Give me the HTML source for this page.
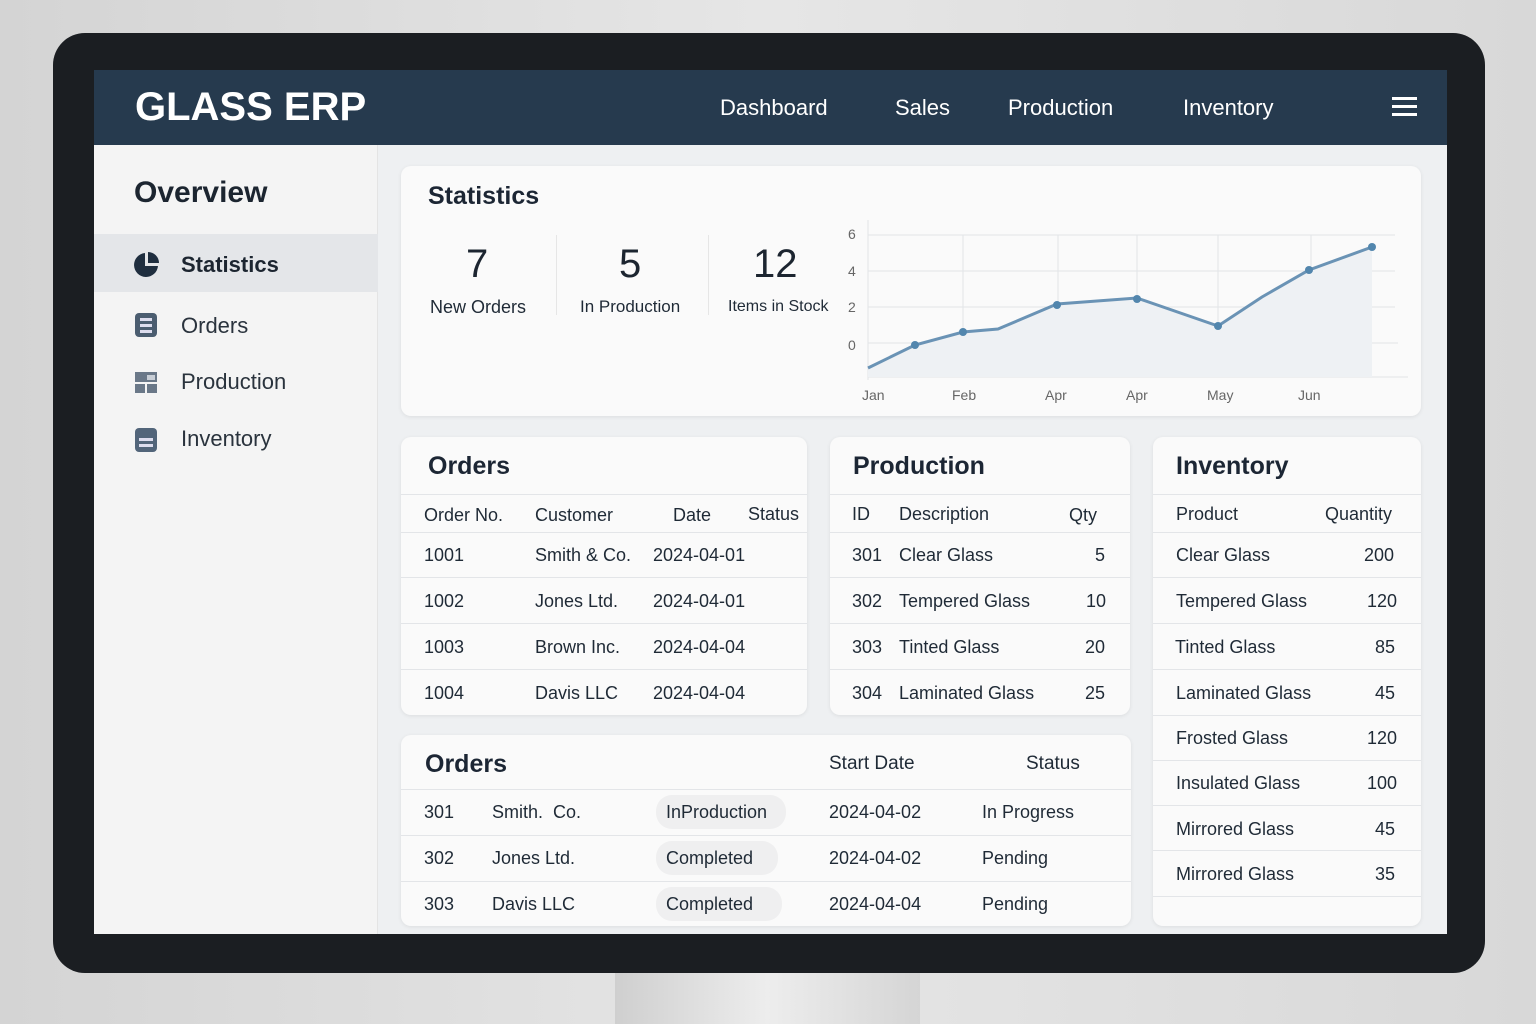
<!DOCTYPE html>
<html><head><meta charset="utf-8"><style>
*{margin:0;padding:0;box-sizing:border-box}
body{width:1536px;height:1024px;overflow:hidden;background:linear-gradient(90deg,#d4d4d4,#e6e6e6 50%,#d8d8d8);font-family:"Liberation Sans",sans-serif;color:#1c2530;position:relative}
.a{position:absolute;white-space:nowrap}
.card{position:absolute;background:#fafafa;border-radius:10px;box-shadow:0 1px 4px rgba(0,0,0,.08)}
.h{font-weight:bold;font-size:25px;color:#1c2634}
.t{font-size:18px;color:#1f2a36}
.line{position:absolute;height:1px;background:#e3e5e8}
.pill{position:absolute;background:#efeff0;border-radius:16px;height:34px}
</style></head><body>
<div class="a" style="left:615px;top:960px;width:305px;height:64px;background:linear-gradient(90deg,#cfcfcf,#ededed,#d5d5d5)"></div>
<div class="a" style="left:53px;top:33px;width:1432px;height:940px;background:#1b1e22;border-radius:32px"></div>
<div class="a" style="left:94px;top:70px;width:1353px;height:864px;background:#eef0f2"></div>
<div class="a" style="left:94px;top:70px;width:1353px;height:75px;background:#263a4e"></div>
<div class="a" style="left:135px;top:85px;font-size:40px;font-weight:bold;color:#fff">GLASS ERP</div>
<div class="a" style="left:720px;top:95px;font-size:22px;color:#fff">Dashboard</div>
<div class="a" style="left:895px;top:95px;font-size:22px;color:#fff">Sales</div>
<div class="a" style="left:1008px;top:95px;font-size:22px;color:#fff">Production</div>
<div class="a" style="left:1183px;top:95px;font-size:22px;color:#fff">Inventory</div>
<div class="a" style="left:1392px;top:97px;width:25px;height:3px;background:#fff;box-shadow:0 8px 0 #fff,0 16px 0 #fff"></div>
<div class="a" style="left:94px;top:145px;width:284px;height:789px;background:#f4f4f4;border-right:1px solid #e4e4e4"></div>
<div class="a" style="left:134px;top:176px;font-size:30px;font-weight:bold">Overview</div>
<div class="a" style="left:94px;top:234px;width:284px;height:58px;background:#e4e6e9"></div>
<svg class="a" style="left:133px;top:251px" width="28" height="28" viewBox="0 0 28 28"><path d="M12 2A12 12 0 1 0 25 15H12Z" fill="#1f2e3f"/><path d="M15 1V12H26A11 11 0 0 0 15 1Z" fill="#1f2e3f"/></svg>
<div class="a" style="left:181px;top:252px;font-size:22px;font-weight:bold">Statistics</div>
<svg class="a" style="left:135px;top:313px" width="24" height="24"><rect width="22" height="24" rx="4" fill="#4b5d70"/><rect x="5" y="5" width="12" height="3" fill="#dde"/><rect x="5" y="11" width="12" height="3" fill="#dde"/><rect x="5" y="17" width="12" height="3" fill="#dde"/></svg>
<div class="a" style="left:181px;top:313px;font-size:22px;color:#2a333d">Orders</div>
<svg class="a" style="left:135px;top:372px" width="24" height="22"><rect width="22" height="10" fill="#6a7888"/><rect y="12" width="10" height="9" fill="#6a7888"/><rect x="12" y="12" width="10" height="9" fill="#6a7888"/><rect x="12" y="3" width="8" height="5" fill="#c8ced6"/></svg>
<div class="a" style="left:181px;top:369px;font-size:22px;color:#2a333d">Production</div>
<svg class="a" style="left:135px;top:428px" width="24" height="24"><rect width="22" height="24" rx="4" fill="#52657a"/><rect x="4" y="10" width="14" height="3" fill="#dde"/><rect x="4" y="16" width="14" height="3" fill="#dde"/></svg>
<div class="a" style="left:181px;top:426px;font-size:22px;color:#2a333d">Inventory</div>
<div class="card" style="left:401px;top:166px;width:1020px;height:250px"></div>
<div class="a h" style="left:428px;top:182px">Statistics</div>
<div class="a" style="left:466px;top:242px;font-size:40px">7</div>
<div class="a t" style="left:430px;top:297px">New Orders</div>
<div class="a" style="left:556px;top:235px;width:1px;height:80px;background:#e6e6e6"></div>
<div class="a" style="left:619px;top:242px;font-size:40px">5</div>
<div class="a t" style="left:580px;top:297px;font-size:17px">In Production</div>
<div class="a" style="left:708px;top:235px;width:1px;height:80px;background:#e6e6e6"></div>
<div class="a" style="left:753px;top:242px;font-size:40px">12</div>
<div class="a t" style="left:728px;top:298px;font-size:16px">Items in Stock</div>
<svg class="a" style="left:840px;top:220px" width="580" height="190" viewBox="840 220 580 190">
<g stroke="#e2e4e7" stroke-width="1"><line x1="868" y1="235" x2="1395" y2="235"/><line x1="868" y1="271" x2="1395" y2="271"/><line x1="868" y1="307" x2="1395" y2="307"/><line x1="868" y1="343" x2="1398" y2="343"/><line x1="868" y1="377" x2="1408" y2="377"/><line x1="868" y1="218" x2="868" y2="380"/><line x1="963" y1="235" x2="963" y2="377"/><line x1="1058" y1="235" x2="1058" y2="377"/><line x1="1137" y1="235" x2="1137" y2="377"/><line x1="1218" y1="235" x2="1218" y2="377"/><line x1="1311" y1="235" x2="1311" y2="377"/></g>
<path d="M868 368L915 345L963 332L998 329L1057 304L1137 298L1218 326L1262 297L1309 270L1372 247L1372 377L868 377Z" fill="#eef1f4"/>
<path d="M868 368L915 345L963 332L998 329L1057 304L1137 298L1218 326L1262 297L1309 270L1372 247" fill="none" stroke="#6a93b5" stroke-width="3"/>
<g fill="#5286ad"><circle cx="915" cy="345" r="4"/><circle cx="963" cy="332" r="4"/><circle cx="1057" cy="305" r="4"/><circle cx="1137" cy="299" r="4"/><circle cx="1218" cy="326" r="4"/><circle cx="1309" cy="270" r="4"/><circle cx="1372" cy="247" r="4"/></g>
<g font-family="Liberation Sans" font-size="14" fill="#666"><text x="848" y="239">6</text><text x="848" y="276">4</text><text x="848" y="312">2</text><text x="848" y="350">0</text>
<text x="862" y="400">Jan</text><text x="952" y="400">Feb</text><text x="1045" y="400">Apr</text><text x="1126" y="400">Apr</text><text x="1207" y="400">May</text><text x="1298" y="400">Jun</text></g>
</svg>
<div class="card" style="left:401px;top:437px;width:406px;height:278px"></div>
<div class="a h" style="left:428px;top:452px">Orders</div>
<div class="line" style="left:401px;top:494px;width:406px"></div>
<div class="a t" style="left:424px;top:505px">Order No.</div><div class="a t" style="left:535px;top:505px">Customer</div><div class="a t" style="left:673px;top:505px">Date</div><div class="a t" style="left:748px;top:504px">Status</div>
<div class="line" style="left:401px;top:532px;width:406px"></div>
<div class="a t" style="left:424px;top:545px">1001</div><div class="a t" style="left:535px;top:545px">Smith &amp; Co.</div><div class="a t" style="left:653px;top:545px">2024-04-01</div>
<div class="line" style="left:401px;top:577px;width:406px"></div>
<div class="a t" style="left:424px;top:591px">1002</div><div class="a t" style="left:535px;top:591px">Jones Ltd.</div><div class="a t" style="left:653px;top:591px">2024-04-01</div>
<div class="line" style="left:401px;top:623px;width:406px"></div>
<div class="a t" style="left:424px;top:637px">1003</div><div class="a t" style="left:535px;top:637px">Brown Inc.</div><div class="a t" style="left:653px;top:637px">2024-04-04</div>
<div class="line" style="left:401px;top:669px;width:406px"></div>
<div class="a t" style="left:424px;top:683px">1004</div><div class="a t" style="left:535px;top:683px">Davis LLC</div><div class="a t" style="left:653px;top:683px">2024-04-04</div>
<div class="card" style="left:830px;top:437px;width:300px;height:278px"></div>
<div class="a h" style="left:853px;top:452px">Production</div>
<div class="line" style="left:830px;top:494px;width:300px"></div>
<div class="a t" style="left:852px;top:504px">ID</div><div class="a t" style="left:899px;top:504px">Description</div><div class="a t" style="left:1069px;top:505px">Qty</div>
<div class="line" style="left:830px;top:532px;width:300px"></div>
<div class="a t" style="left:852px;top:545px">301</div><div class="a t" style="left:899px;top:545px">Clear Glass</div><div class="a t" style="left:1095px;top:545px">5</div>
<div class="line" style="left:830px;top:577px;width:300px"></div>
<div class="a t" style="left:852px;top:591px">302</div><div class="a t" style="left:899px;top:591px">Tempered Glass</div><div class="a t" style="left:1086px;top:591px">10</div>
<div class="line" style="left:830px;top:623px;width:300px"></div>
<div class="a t" style="left:852px;top:637px">303</div><div class="a t" style="left:899px;top:637px">Tinted Glass</div><div class="a t" style="left:1085px;top:637px">20</div>
<div class="line" style="left:830px;top:669px;width:300px"></div>
<div class="a t" style="left:852px;top:683px">304</div><div class="a t" style="left:899px;top:683px">Laminated Glass</div><div class="a t" style="left:1085px;top:683px">25</div>
<div class="card" style="left:1153px;top:437px;width:268px;height:489px"></div>
<div class="a h" style="left:1176px;top:452px">Inventory</div>
<div class="line" style="left:1153px;top:494px;width:268px"></div>
<div class="a t" style="left:1176px;top:504px">Product</div><div class="a t" style="left:1325px;top:504px">Quantity</div>
<div class="line" style="left:1153px;top:532px;width:268px"></div>
<div class="a t" style="left:1176px;top:545px">Clear Glass</div><div class="a t" style="left:1364px;top:545px">200</div>
<div class="line" style="left:1153px;top:577px;width:268px"></div>
<div class="a t" style="left:1176px;top:591px">Tempered Glass</div><div class="a t" style="left:1367px;top:591px">120</div>
<div class="line" style="left:1153px;top:623px;width:268px"></div>
<div class="a t" style="left:1175px;top:637px">Tinted Glass</div><div class="a t" style="left:1375px;top:637px">85</div>
<div class="line" style="left:1153px;top:669px;width:268px"></div>
<div class="a t" style="left:1176px;top:683px">Laminated Glass</div><div class="a t" style="left:1375px;top:683px">45</div>
<div class="line" style="left:1153px;top:715px;width:268px"></div>
<div class="a t" style="left:1176px;top:728px">Frosted Glass</div><div class="a t" style="left:1367px;top:728px">120</div>
<div class="line" style="left:1153px;top:760px;width:268px"></div>
<div class="a t" style="left:1176px;top:773px">Insulated Glass</div><div class="a t" style="left:1367px;top:773px">100</div>
<div class="line" style="left:1153px;top:805px;width:268px"></div>
<div class="a t" style="left:1176px;top:819px">Mirrored Glass</div><div class="a t" style="left:1375px;top:819px">45</div>
<div class="line" style="left:1153px;top:850px;width:268px"></div>
<div class="a t" style="left:1176px;top:864px">Mirrored Glass</div><div class="a t" style="left:1375px;top:864px">35</div>
<div class="line" style="left:1153px;top:896px;width:268px"></div>
<div class="card" style="left:401px;top:735px;width:730px;height:191px"></div>
<div class="a h" style="left:425px;top:750px">Orders</div>
<div class="a t" style="left:829px;top:753px;font-size:19px">Start Date</div><div class="a t" style="left:1026px;top:753px;font-size:19px">Status</div>
<div class="line" style="left:401px;top:789px;width:730px"></div>
<div class="pill" style="left:656px;top:795px;width:130px"></div>
<div class="a t" style="left:424px;top:802px">301</div><div class="a t" style="left:492px;top:802px">Smith.&nbsp; Co.</div><div class="a t" style="left:666px;top:802px">InProduction</div><div class="a t" style="left:829px;top:802px">2024-04-02</div><div class="a t" style="left:982px;top:802px">In Progress</div>
<div class="line" style="left:401px;top:835px;width:730px"></div>
<div class="pill" style="left:656px;top:841px;width:122px"></div>
<div class="a t" style="left:424px;top:848px">302</div><div class="a t" style="left:492px;top:848px">Jones Ltd.</div><div class="a t" style="left:666px;top:848px">Completed</div><div class="a t" style="left:829px;top:848px">2024-04-02</div><div class="a t" style="left:982px;top:848px">Pending</div>
<div class="line" style="left:401px;top:881px;width:730px"></div>
<div class="pill" style="left:656px;top:887px;width:126px"></div>
<div class="a t" style="left:424px;top:894px">303</div><div class="a t" style="left:492px;top:894px">Davis LLC</div><div class="a t" style="left:666px;top:894px">Completed</div><div class="a t" style="left:829px;top:894px">2024-04-04</div><div class="a t" style="left:982px;top:894px">Pending</div>
</body></html>
